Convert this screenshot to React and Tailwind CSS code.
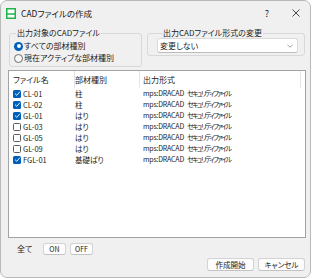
import React from "react";

const rows = [
  { name: "CL-01", kind: "柱", on: true },
  { name: "CL-02", kind: "柱", on: true },
  { name: "GL-01", kind: "はり", on: true },
  { name: "GL-03", kind: "はり", on: false },
  { name: "GL-05", kind: "はり", on: false },
  { name: "GL-09", kind: "はり", on: false },
  { name: "FGL-01", kind: "基礎ばり", on: true },
];

const Check = ({ on }) =>
  on ? (
    <span className="w-[8px] h-[8px] rounded-[1.5px] bg-[#005fb8] flex items-center justify-center shrink-0">
      <svg width="7" height="7" viewBox="0 0 7 7">
        <polyline points="1,3.6 2.8,5.3 6,1.6" fill="none" stroke="#fff" strokeWidth="0.9" />
      </svg>
    </span>
  ) : (
    <span className="w-[8px] h-[8px] rounded-[1.5px] border border-[#5b5b5b] bg-white shrink-0"></span>
  );

const Radio = ({ on }) =>
  on ? (
    <span className="w-[9px] h-[9px] rounded-full bg-[#005fb8] flex items-center justify-center shrink-0">
      <span className="w-[4px] h-[4px] rounded-full bg-white"></span>
    </span>
  ) : (
    <span className="w-[9px] h-[9px] rounded-full border border-[#6b6b6b] bg-[#f7f7f7] shrink-0"></span>
  );

const Btn = ({ children, className }) => (
  <div
    className={`flex items-center justify-center bg-[#fdfdfd] border border-[#d3d3d3] border-b-[#c2c2c2] rounded-[3px] ${className}`}
  >
    {children}
  </div>
);

export default function App() {
  return (
    <div className="w-[313px] h-[279px] bg-white font-['Noto_Sans_CJK_JP','Noto_Sans',sans-serif] [font-feature-settings:'palt'] text-[8px] leading-none text-[#1b1b1b]">
      <div className="w-[311px] h-[278px] rounded-[7px] border border-[#b9b9b9] bg-[#f0f0f0] flex flex-col overflow-hidden">
        {/* Title bar */}
        <div className="h-[24px] flex items-center shrink-0">
          <svg className="ml-[5px]" width="10" height="11" viewBox="0 0 10 11">
            <rect x="0.75" y="0.75" width="8.5" height="9.5" fill="#fff" stroke="#21b24b" strokeWidth="1.5" />
            <line x1="1" y1="6" x2="9" y2="6" stroke="#21b24b" strokeWidth="1.3" />
          </svg>
          <span className="ml-[5px] text-[8.5px]">CADファイルの作成</span>
          <div className="ml-auto flex items-center">
            <span className="w-[30px] text-center text-[9px]">?</span>
            <span className="w-[28px] flex justify-center">
              <svg width="8" height="8" viewBox="0 0 8 8">
                <path d="M0.5 0.5 L7.5 7.5 M7.5 0.5 L0.5 7.5" stroke="#333" strokeWidth="0.9" />
              </svg>
            </span>
          </div>
        </div>

        {/* Group boxes */}
        <div className="flex items-start mt-[3px] ml-[8px]">
          <fieldset className="w-[133px] border border-[#d8d8d8] rounded-[3px] pl-[4px] pt-[2px] pb-[2px]">
            <legend className="ml-[2px] px-[1px] leading-[10px]">出力対象のCADファイル</legend>
            <div className="h-[12px] flex items-center gap-[1px]">
              <Radio on />
              <span>すべての部材種別</span>
            </div>
            <div className="h-[12px] flex items-center gap-[1px]">
              <Radio />
              <span>現在アクティブな部材種別</span>
            </div>
          </fieldset>
          <fieldset className="ml-[5px] w-[158px] border border-[#d8d8d8] rounded-[3px] pl-[9px] pb-[2px]">
            <legend className="ml-[5px] px-[1px] leading-[10px]">出力CADファイル形式の変更</legend>
            <div className="w-[141px] h-[15px] bg-white border border-[#dadada] border-b-[#bdbdbd] rounded-[3px] flex items-center pl-[2px] pr-[4px]">
              <span>変更しない</span>
              <svg className="ml-auto" width="6" height="4" viewBox="0 0 6 4">
                <polyline points="0.5,0.8 3,3.2 5.5,0.8" fill="none" stroke="#777" strokeWidth="0.7" />
              </svg>
            </div>
          </fieldset>
        </div>

        {/* List */}
        <div className="mt-[3px] ml-[7px] w-[298px] h-[168px] bg-white border border-[#a3a3a3] shrink-0">
          <div className="grid grid-cols-[66px_65px_1fr] h-[17px]">
            <div className="flex items-center pl-[4px] border-r border-[#e5e5e5]">ファイル名</div>
            <div className="flex items-center pl-0 border-r border-[#e5e5e5]">部材種別</div>
            <div className="flex items-center pl-[3px] mr-[4px] border-r border-[#e5e5e5]">出力形式</div>
          </div>
          {rows.map((r) => (
            <div key={r.name} className="grid grid-cols-[66px_65px_1fr] h-[11px] text-[7.5px]">
              <div className="flex items-center pl-[4px] gap-[2px]">
                <Check on={r.on} />
                <span>{r.name}</span>
              </div>
              <div className="flex items-center">{r.kind}</div>
              <div className="flex items-center pl-[3px] text-[7px] gap-[3px]">
                <span className="tracking-[-0.2px]">mps:DRACAD</span>
                <span className="tracking-[-1.7px]">セキュリティファイル</span>
              </div>
            </div>
          ))}
        </div>

        {/* All on/off */}
        <div className="flex items-center mt-[5px] ml-[16px] h-[12px]">
          <span className="w-[26px]">全て</span>
          <Btn className="w-[23px] h-[12px] text-[7px]">ON</Btn>
          <Btn className="ml-[4px] w-[23px] h-[12px] text-[7px]">OFF</Btn>
        </div>

        {/* Action buttons */}
        <div className="flex justify-end gap-[4px] mt-[3px] mr-[5px]">
          <Btn className="w-[47px] h-[13px] text-[7.5px]">作成開始</Btn>
          <Btn className="w-[47px] h-[13px] text-[7.5px]">キャンセル</Btn>
        </div>
      </div>
    </div>
  );
}
